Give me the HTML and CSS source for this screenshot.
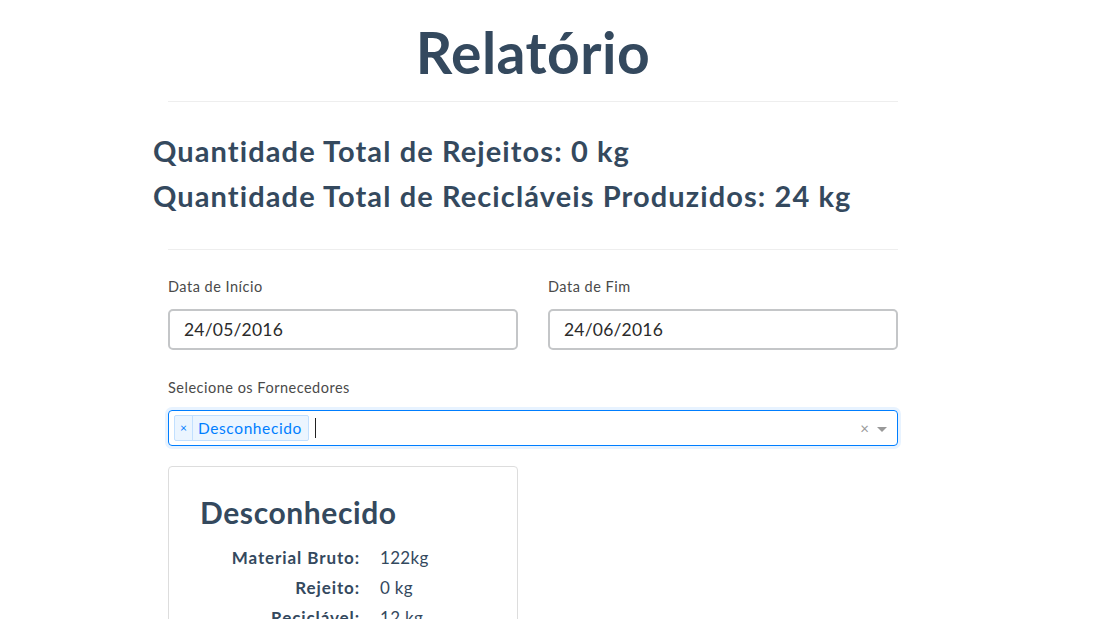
FILE: index.html
```html
<!DOCTYPE html>
<html lang="pt">
<head>
<meta charset="utf-8">
<title>Relatório</title>
<link rel="stylesheet" href="styles.css">
</head>
<body>
<div class="page">
  <h1 class="title">Relatório</h1>
  <hr class="rule">
  <div class="totals">
    <h2 class="total">Quantidade Total de Rejeitos: 0 kg</h2>
    <h2 class="total">Quantidade Total de Recicláveis Produzidos: 24 kg</h2>
  </div>
  <hr class="rule rule2">
  <div class="dates">
    <div class="field">
      <label class="label">Data de Início</label>
      <div class="input">24/05/2016</div>
    </div>
    <div class="field">
      <label class="label">Data de Fim</label>
      <div class="input">24/06/2016</div>
    </div>
  </div>
  <div class="field sel-field">
    <label class="label">Selecione os Fornecedores</label>
    <div class="select">
      <div class="tag"><span class="tag-x">×</span><span class="tag-label">Desconhecido</span></div>
      <span class="caret"></span>
      <span class="spacer"></span>
      <span class="clear">×</span>
      <span class="arrow"></span>
    </div>
  </div>
  <div class="card">
    <h3 class="card-title">Desconhecido</h3>
    <dl class="dl">
      <dt>Material Bruto:</dt><dd>122kg</dd>
      <dt>Rejeito:</dt><dd>0 kg</dd>
      <dt>Reciclável:</dt><dd>12 kg</dd>
    </dl>
  </div>
</div>
</body>
</html>
```
FILE: styles.css
```css
* { box-sizing: border-box; }
html, body { margin: 0; padding: 0; background: #fff; }
body {
  font-family: "Lato", "Open Sans", sans-serif;
  color: #34495e;
  overflow: hidden;
  height: 619px;
}
.page {
  width: 730px;
  margin-left: 168px;
}
.title {
  margin: 0;
  padding-top: 19px;
  height: 101px;
  font-size: 57px;
  line-height: 66px;
  font-weight: 700;
  text-align: center;
  letter-spacing: 0.5px;
  color: #34495e;
}
.rule {
  margin: 0;
  border: 0;
  border-top: 1px solid #eeeeee;
  height: 0;
}
.totals {
  margin-left: -15px;
  padding-top: 26px;
  padding-bottom: 31px;
}
.total {
  margin: 0;
  font-size: 29px;
  line-height: 45px;
  font-weight: 700;
  color: #34495e;
  letter-spacing: 1.1px;
}
.dates {
  display: flex;
  gap: 30px;
  padding-top: 27px;
}
.field { flex: 1; display: flex; flex-direction: column; }
.label {
  font-size: 14.5px;
  line-height: 20px;
  color: #4a4a4a;
  margin-bottom: 12px;
  letter-spacing: 0.5px;
}
.input {
  height: 41px;
  border: 2px solid #c4c6c8;
  border-radius: 5px;
  padding: 0 14px;
  font-size: 17.5px;
  line-height: 37px;
  color: #2b2b2b;
  letter-spacing: 0.2px;
}
.sel-field { margin-top: 28px; }
.sel-field .label { margin-bottom: 12px; }
.select {
  height: 36px;
  border: 1px solid #007eff;
  border-radius: 4px;
  box-shadow: 0 0 0 3px #e8f3ff;
  display: flex;
  align-items: center;
  padding: 0 10px 0 5px;
}
.tag {
  display: flex;
  height: 26px;
  background: #ebf5ff;
  border: 1px solid #c2e0ff;
  border-radius: 2px;
  color: #007eff;
  font-size: 15.5px;
}
.tag-x {
  width: 18px;
  border-right: 1px solid #c2e0ff;
  text-align: center;
  line-height: 24px;
  font-size: 12px;
}
.tag-label {
  padding: 0 6px 0 5px;
  line-height: 24px;
  letter-spacing: 0.6px;
}
.caret {
  width: 1px;
  height: 20px;
  background: #222;
  margin-left: 6px;
}
.spacer { flex: 1; }
.clear {
  color: #999;
  font-size: 15px;
  line-height: 1;
  margin-right: 8px;
}
.arrow {
  width: 0; height: 0;
  border-left: 5px solid transparent;
  border-right: 5px solid transparent;
  border-top: 5px solid #999;
  margin-top: 2px;
}
.card {
  width: 350px;
  margin-top: 20px;
  border: 1px solid #dddddd;
  border-radius: 4px;
  padding: 25px 31px 20px 31px;
  height: 200px;
}
.card-title {
  margin: 0;
  font-size: 30px;
  line-height: 40px;
  font-weight: 700;
  color: #34495e;
  letter-spacing: 0.6px;
}
.dl {
  margin: 11px 0 0 0;
  display: grid;
  grid-template-columns: 160px 1fr;
  column-gap: 20px;
  font-size: 17px;
  line-height: 30px;
}
.dl dt {
  font-weight: 700;
  text-align: right;
  color: #34495e;
  letter-spacing: 0.9px;
}
.dl dd { margin: 0; color: #34495e; letter-spacing: 0.3px; }
```
